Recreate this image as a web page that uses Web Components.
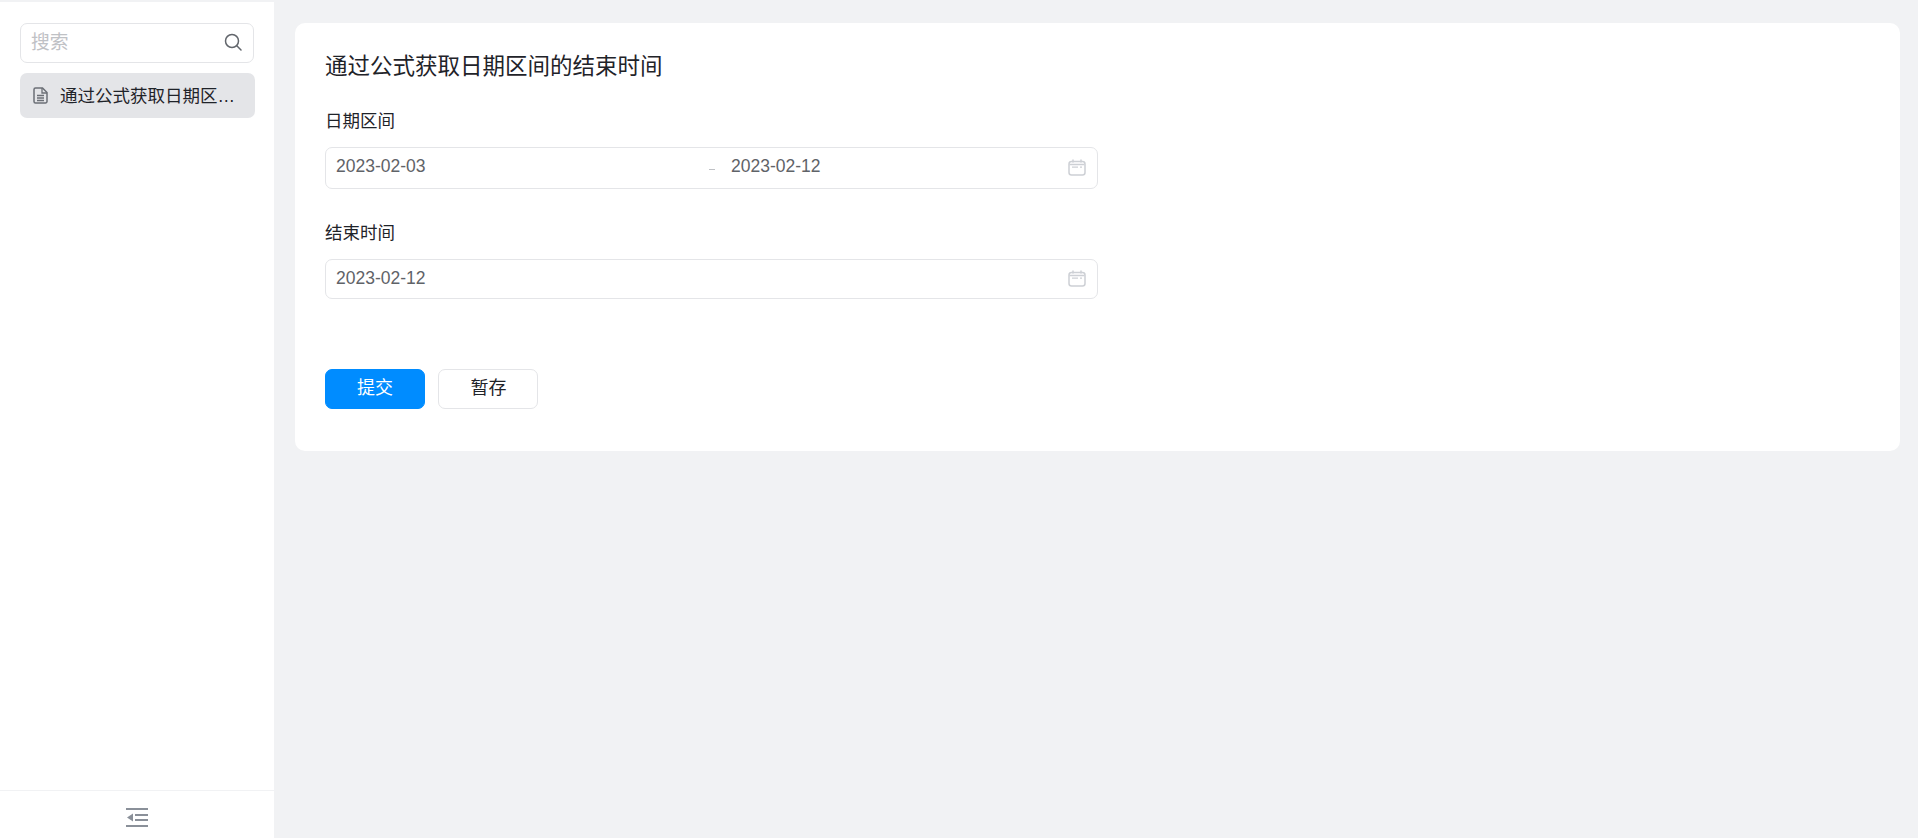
<!DOCTYPE html>
<html lang="zh">
<head>
<meta charset="utf-8">
<title>通过公式获取日期区间的结束时间</title>
<style>
html, body { margin: 0; height: 100%; }
body { font-family: "Liberation Sans", "Noto Sans CJK SC", sans-serif; color: #1f2329; }
</style>
</head>
<body>
<app-shell>
    <side-bar slot="side">
        <search-box placeholder="搜索"></search-box>
        <side-item>通过公式获取日期区间的结束时间</side-item>
    </side-bar>
    <form-card heading="通过公式获取日期区间的结束时间">
        <form-field label="日期区间">
            <date-input start="2023-02-03" end="2023-02-12"></date-input>
        </form-field>
        <form-field label="结束时间">
            <date-input start="2023-02-12"></date-input>
        </form-field>
        <div slot="actions">
            <app-button kind="primary">提交</app-button>
            <app-button>暂存</app-button>
        </div>
    </form-card>
</app-shell>

<script>
const CJK = `"Liberation Sans", "Noto Sans CJK SC", sans-serif`;

class AppShell extends HTMLElement {
    constructor() {
        super();
        this.attachShadow({ mode: "open" });
        this.shadowRoot.innerHTML = `
        <style>
        :host { display: flex; box-sizing: border-box; height: 838px; padding-top: 2px; background: #f1f2f4; overflow: hidden; }
        main { flex: 1; min-width: 0; padding: 21px 18px 0 21px; }
        </style>
        <slot name="side"></slot>
        <main><slot></slot></main>`;
    }
}

class SideBar extends HTMLElement {
    constructor() {
        super();
        this.attachShadow({ mode: "open" });
        this.shadowRoot.innerHTML = `
        <style>
        :host { display: flex; flex-direction: column; width: 274px; flex: none; background: #fff; }
        #top { flex: 1; padding: 21px 19px 0 20px; display: flex; flex-direction: column; gap: 10px; }
        #foot { box-sizing: border-box; height: 48px; padding-top: 6px; border-top: 1px solid #f1f2f4; display: flex; align-items: center; justify-content: center; }
        svg { display: block; }
        </style>
        <div id="top"><slot></slot></div>
        <div id="foot">
            <svg width="22" height="19" viewBox="0 0 22 19">
                <path d="M0 1h22M9 7h13M9 12h13M0 18h22" stroke="#8a9099" stroke-width="2" fill="none"/>
                <path d="M7 5.5v8L1 9.5z" fill="#8a9099"/>
            </svg>
        </div>`;
    }
}

class SearchBox extends HTMLElement {
    constructor() {
        super();
        this.attachShadow({ mode: "open" });
        this.shadowRoot.innerHTML = `
        <style>
        :host { display: flex; align-items: center; box-sizing: border-box; width: 234px; height: 40px; padding: 0 11px 0 10px; background: #fff; border: 1px solid #e4e5e8; border-radius: 7px; font-family: ${CJK}; }
        span { flex: 1; font-size: 18.75px; line-height: 36px; height: 36px; color: #bfc1c5; }
        svg { display: block; margin-bottom: 2px; }
        </style>
        <span></span>
        <svg width="18" height="18" viewBox="0 0 18 18" fill="none" stroke="#62666c" stroke-width="1.5">
            <circle cx="8" cy="8" r="6.5"/>
            <path d="M12.8 12.8L17 17" stroke-linecap="round"/>
        </svg>`;
    }
    connectedCallback() {
        this.shadowRoot.querySelector("span").textContent = this.getAttribute("placeholder");
    }
}

class SideItem extends HTMLElement {
    constructor() {
        super();
        this.attachShadow({ mode: "open" });
        this.shadowRoot.innerHTML = `
        <style>
        :host { display: flex; align-items: center; gap: 12px; box-sizing: border-box; width: 235px; height: 45px; padding: 0 17px 0 13px; background: #e4e5e8; border-radius: 7px; font-family: ${CJK}; }
        span { flex: 1; min-width: 0; padding-bottom: 2px; font-size: 17.5px; color: #1f2329; white-space: nowrap; overflow: hidden; text-overflow: ellipsis; }
        svg { display: block; flex: none; }
        </style>
        <svg width="15" height="17" viewBox="0 0 15 17" fill="none" stroke="#6b6f76" stroke-width="1.5">
            <path d="M2.5 1h7l4.5 4.5V14.5a1.5 1.5 0 0 1-1.5 1.5h-10A1.5 1.5 0 0 1 1 14.5v-12A1.5 1.5 0 0 1 2.5 1z"/>
            <path d="M9 1v5h5M4 8.5h7M4 11h7M4 13.5h7" stroke-width="1.3"/>
        </svg>
        <span><slot></slot></span>`;
    }
}

class FormCard extends HTMLElement {
    constructor() {
        super();
        this.attachShadow({ mode: "open" });
        this.shadowRoot.innerHTML = `
        <style>
        :host { display: block; box-sizing: border-box; height: 428px; padding: 28px 30px 0; background: #fff; border-radius: 10px; font-family: ${CJK}; }
        h1 { margin: 0 0 26px; font-size: 22.5px; font-weight: 400; line-height: 32px; color: #1f2329; }
        #fields { display: flex; flex-direction: column; gap: 32px; width: 773px; }
        #actions { margin-top: 70px; }
        </style>
        <h1></h1>
        <div id="fields"><slot></slot></div>
        <div id="actions"><slot name="actions"></slot></div>`;
    }
    connectedCallback() {
        this.shadowRoot.querySelector("h1").textContent = this.getAttribute("heading");
    }
}

class FormField extends HTMLElement {
    constructor() {
        super();
        this.attachShadow({ mode: "open" });
        this.shadowRoot.innerHTML = `
        <style>
        :host { display: block; }
        label { display: block; margin-bottom: 14px; font-size: 17.5px; line-height: 24px; color: #1f2329; }
        </style>
        <label></label>
        <slot></slot>`;
    }
    connectedCallback() {
        this.shadowRoot.querySelector("label").textContent = this.getAttribute("label");
    }
}

class DateInput extends HTMLElement {
    constructor() {
        super();
        this.attachShadow({ mode: "open" });
        this.shadowRoot.innerHTML = `
        <style>
        :host { display: flex; align-items: center; box-sizing: border-box; height: 40px; padding: 0 11px 2px 10px; background: #fff; border: 1px solid #e4e5e8; border-radius: 7px; font-size: 17.5px; color: #5f6368; font-family: "Liberation Sans", sans-serif; }
        :host([end]) { height: 42px; }
        .val { flex: 1; min-width: 0; }
        :host([end]) .val { margin-bottom: 2px; }
        :host([end]) #from { flex: none; width: 373px; }
        #sep { display: none; width: 6px; height: 1px; margin: 4px 16px 0 0; background: #bfc1c5; }
        #to { display: none; }
        :host([end]) #sep { display: block; }
        :host([end]) #to { display: block; }
        svg { display: block; flex: none; }
        </style>
        <span class="val" id="from"></span>
        <i id="sep"></i>
        <span class="val" id="to"></span>
        <svg width="18" height="17" viewBox="0 0 18 17" fill="none" stroke="#cdd0d5" stroke-width="1.5">
            <rect x="1" y="2.5" width="16" height="13.5" rx="2.5"/>
            <path d="M5 .5v3M13 .5v3"/>
            <path d="M1.5 5.5h15M4 8.2h6M12 8.2h2" stroke-width="1.3"/>
        </svg>`;
    }
    connectedCallback() {
        this.shadowRoot.getElementById("from").textContent = this.getAttribute("start");
        this.shadowRoot.getElementById("to").textContent = this.getAttribute("end") || "";
    }
}

class AppButton extends HTMLElement {
    constructor() {
        super();
        this.attachShadow({ mode: "open" });
        this.shadowRoot.innerHTML = `
        <style>
        :host { display: inline-flex; align-items: center; justify-content: center; box-sizing: border-box; width: 100px; height: 40px; margin-right: 9px; padding-bottom: 6px; background: #fff; border: 1px solid #e4e5e8; border-radius: 7px; font-size: 18px; color: #1f2329; font-family: ${CJK}; }
        :host([kind="primary"]) { background: #008cff; border-color: #008cff; color: #fff; }
        </style>
        <slot></slot>`;
    }
}

window.customElements.define("app-shell", AppShell);
window.customElements.define("side-bar", SideBar);
window.customElements.define("search-box", SearchBox);
window.customElements.define("side-item", SideItem);
window.customElements.define("form-card", FormCard);
window.customElements.define("form-field", FormField);
window.customElements.define("date-input", DateInput);
window.customElements.define("app-button", AppButton);
</script>
</body>
</html>
